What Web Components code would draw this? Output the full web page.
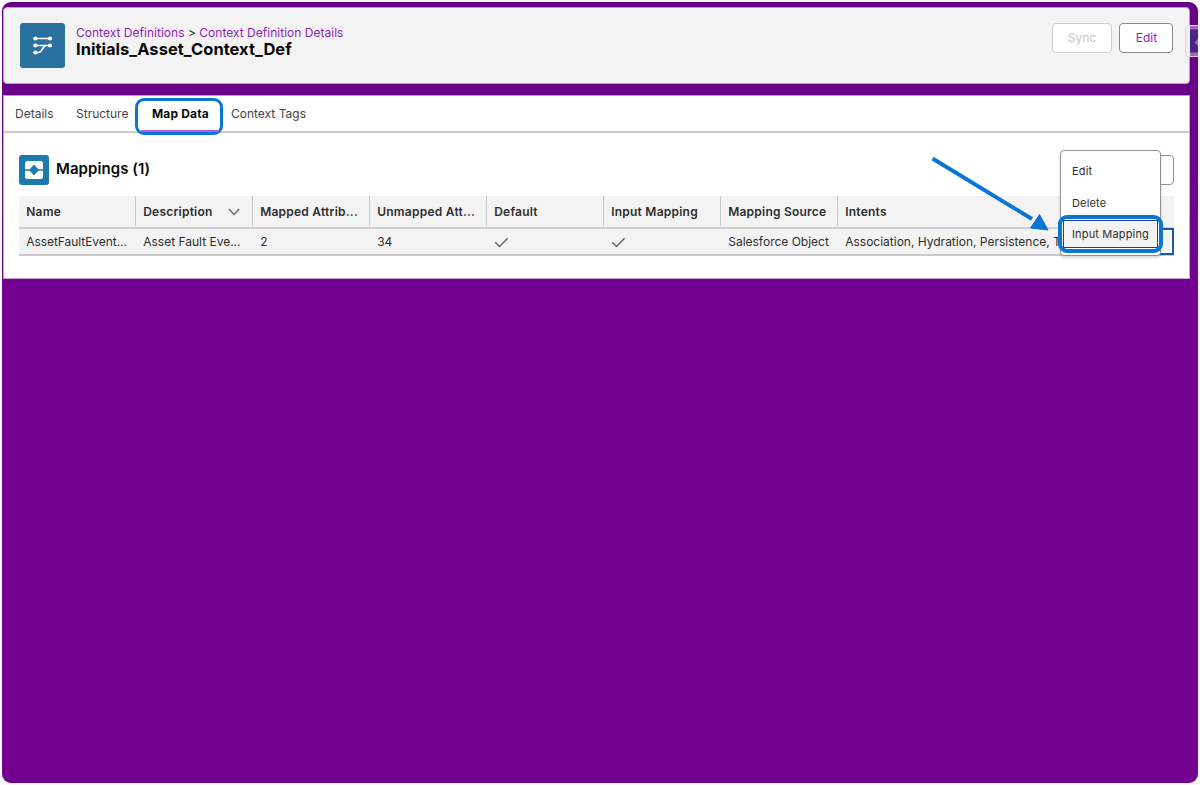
<!DOCTYPE html>
<html lang="en">
<head>
<meta charset="utf-8">
<title>Context Definition Details</title>
<style>
html,body{margin:0;height:100%;background:#fbfafc;overflow:hidden}
body{font-family:Inter,"Liberation Sans",sans-serif;font-size:12px;color:#2e2e2e}
</style>
</head>
<body>
<app-frame>
  <page-header></page-header>
  <mapping-panel></mapping-panel>
</app-frame>
<script>
function define(name, html){
  const t=document.createElement('template');
  t.innerHTML=html;
  customElements.define(name, class extends HTMLElement{
    constructor(){super();this.attachShadow({mode:'open'}).append(t.content.cloneNode(true));}
  });
}

define('app-frame', `<style>
:host{display:flex;flex-direction:column;gap:11px;box-sizing:border-box;margin:2px;width:1196px;height:781px;padding:5px 8px 0 1px;border-radius:9px;overflow:hidden;position:relative;background:linear-gradient(#670086 0,#6a0088 92px,#720090 277px,#720090 100%)}
.side{position:absolute;left:1183px;top:23px;width:20px;height:32px;box-sizing:border-box;border:1px solid #d6dcd9;border-radius:4px 0 0 4px;overflow:hidden}
.side svg{display:block}
</style><slot></slot><div class="side"><svg width="18" height="30" viewBox="0 0 18 30"><path d="M0 0h4v30H0Z" fill="#eef0ef"/><path d="M4 0h14v30H4Z" fill="#a766b9"/><path d="M4 3.500h14v23H4Z" fill="#482688"/><path d="M14 11 8.500 16.500 14 22Z" fill="#a766b9"/></svg></div>`);

define('page-header', `<style>
:host{display:flex;box-sizing:border-box;height:77px;flex:none;padding:15px 16px 0;background:#f3f3f3;border:1px solid #b3a5bb;border-radius:4px;align-items:flex-start}
.ic{width:45px;height:45px;flex:none;margin-left:-.5px}
.t{flex:1;padding:2px 0 0 11.500px}
.bc{line-height:16px;white-space:nowrap;letter-spacing:.02px}
.bc a{color:#8d1fb3}
h1{margin:0;font-size:16.500px;line-height:17px;font-weight:700;color:#080808;letter-spacing:.02px}
.acts{display:flex;gap:7.500px}
</style>
<svg class="ic" viewBox="0 0 45 45"><rect width="45" height="45" rx="3" fill="#29719e"/><g fill="none" stroke="#fff" stroke-width="1.700"><path d="M15 15.500h15M15 22.500h15M15 29.500h3.500c4 0 3.500-6 7.500-7"/></g><g fill="#fff"><circle cx="15.300" cy="15.500" r="2.100"/><circle cx="30" cy="15.500" r="2.100"/><circle cx="15.300" cy="22.500" r="2.100"/><circle cx="30" cy="22.500" r="2.100"/><circle cx="15.300" cy="29.500" r="2.100"/></g></svg>
<div class="t"><div class="bc"><a>Context Definitions</a> &gt; <a>Context Definition Details</a></div><h1>Initials_Asset_Context_Def</h1></div>
<div class="acts"><ui-button style="--w:60px;--c:#c6c6c6;--b:#d0d0d0">Sync</ui-button><ui-button style="--w:54px;--c:#8d1fb3;--b:#8a8a8a">Edit</ui-button></div>`);

define('ui-button', `<style>
:host{display:block}
button{display:block;margin:0;padding:0 0 1px 1px;box-sizing:border-box;width:var(--w);height:30px;border:1px solid var(--b);border-radius:4px;background:#fff;color:var(--c);font:12px Inter,sans-serif}
</style><button><slot></slot></button>`);

define('mapping-panel', `<style>
:host{display:block;box-sizing:border-box;height:184px;background:#fff;border:1px solid #c4a8d0;border-top-color:#b79ac4;position:relative}
nav{display:flex;height:35px;border-bottom:2px solid #cbcbcb;line-height:35px;color:#444}
nav span{white-space:nowrap}
nav span:nth-child(1){width:61px;padding-left:11px}
nav span:nth-child(2){width:63px}
nav .sel{position:relative;width:58px;padding:0 9px 0 13px;font-weight:700;color:#080808;letter-spacing:.16px}
.ring{position:absolute;left:-4px;top:2px;width:82px;height:31px;border:3px solid #0a76d3;border-radius:9px}
.ring i{position:absolute;left:3px;right:1px;bottom:0;height:2px;background:#c550e8}
.head{display:flex;height:63px;padding:22px 15px 0;box-sizing:border-box}
.head svg{width:30px;height:30px;margin-left:-.5px}
h2{margin:-1px 0 0 7.500px;font-size:15px;line-height:29px;font-weight:600;color:#080808;letter-spacing:.07px;flex:1}
.blank{width:60px;height:28px;border:1px solid #929292;border-radius:4px}
data-table{margin:0 15px}
action-menu{position:absolute;left:1056px;top:54px}
.arrow{position:absolute;left:920px;top:53px}
</style>
<nav><span>Details</span><span>Structure</span><span class="sel">Map Data<b class="ring"><i></i></b></span><span style="padding-left:12px">Context Tags</span></nav>
<div class="head"><svg viewBox="0 0 30 30"><rect width="30" height="30" rx="3" fill="#1d7aac"/><rect x="6" y="6" width="18" height="18" rx="2.500" fill="#fff"/><path d="M6 15h18" stroke="#1d7aac" stroke-width="1.500"/><path d="M15 9.500 20 15l-5 5.500L10 15Z" fill="#1d7aac"/></svg><h2>Mappings (1)</h2><div class="blank"></div></div>
<data-table></data-table>
<svg class="arrow" width="140" height="90" viewBox="0 0 140 90"><path d="M8.500 9.500 108 70" stroke="#0a76d3" stroke-width="4"/><path d="M124 81 106.500 79 115.500 65.500Z" fill="#0a76d3" stroke="#0a76d3"/></svg>
<action-menu></action-menu>`);

define('data-table', `<style>
:host{display:block;width:1155px}
.r{display:grid;grid-template-columns:repeat(7,117px) 1fr;background:#f3f3f3;box-sizing:border-box;white-space:nowrap;position:relative}
.h{height:33px;line-height:31px;font-weight:600;color:#2e2e2e;border-bottom:2px solid #d0d0d0;letter-spacing:.23px}
.d{height:27px;line-height:25px;border-bottom:2px solid #cacaca}
.d>div:first-child{letter-spacing:-.05px}
.r>div{padding-left:7.200px;position:relative}
.h>div:not(:last-child){border-right:1px solid #c8c8c8;height:30px}
.h>div:nth-child(2) svg{position:absolute;right:12px;top:12px}
.focus{position:absolute;right:0;top:-1px;width:30px;height:23px;border:2px solid #2056aa;box-shadow:inset 0 0 0 2px #fff}
</style>
<div class="r h"><div>Name</div><div>Description<svg width="12" height="8" viewBox="0 0 12 8"><path d="m.8 1 5.200 5.500L11.200 1" fill="none" stroke="#666" stroke-width="1.300"/></svg></div><div>Mapped Attrib...</div><div>Unmapped Att...</div><div>Default</div><div>Input Mapping</div><div>Mapping Source</div><div>Intents</div></div>
<div class="r d"><div>AssetFaultEvent...</div><div>Asset Fault Eve...</div><div>2</div><div>34</div><div><check-mark></check-mark></div><div><check-mark></check-mark></div><div>Salesforce Object</div><div>Association, Hydration, Persistence, T</div><span class="focus"></span></div>`);

define('check-mark', `<style>:host{display:block;padding-top:8px}svg{display:block}</style><svg width="15" height="12" viewBox="0 0 15 12"><path d="m1.200 5.300 4.300 4.200L13.600 1.300" fill="none" stroke="#666" stroke-width="1.500"/></svg>`);

define('action-menu', `<style>
:host{display:block;box-sizing:border-box;width:101px;height:106px;padding-top:4px;border:1px solid #929292;border-radius:4px;background:#fff;box-shadow:0 2px 3px rgba(0,0,0,.16);font-size:11px;letter-spacing:.16px;color:#2e2e2e}
div{box-sizing:border-box;height:32px;line-height:32px;padding-left:11px;white-space:nowrap}
.on{position:relative;margin:1px 2px 0 2px;height:28px;line-height:27px;padding-left:8px;border:1.500px solid #1c3f97;background:#f3f3f3}
.on::after{content:"";position:absolute;left:-6px;top:-6px;right:-6px;bottom:-6px;border:4px solid #0a76d3;border-radius:9px}
</style><div>Edit</div><div>Delete</div><div class="on">Input Mapping</div>`);
</script>
</body>
</html>
